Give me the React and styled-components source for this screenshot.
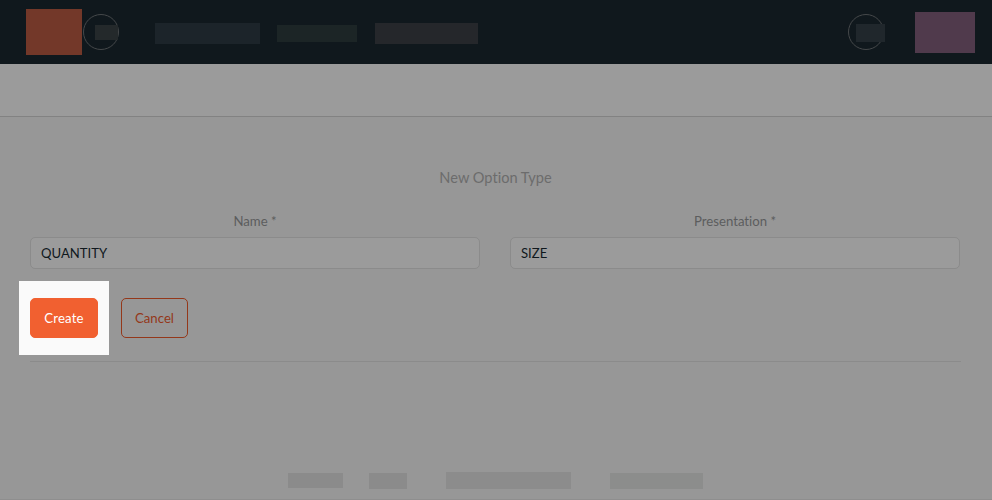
import React from "react";
import styled, { createGlobalStyle } from "styled-components";

const GlobalStyle = createGlobalStyle`
  *, *::before, *::after { box-sizing: border-box; }
  body {
    margin: 0;
    background: #979797;
    font-family: Lato, sans-serif;
    font-size: 13px;
    font-variant-ligatures: none;
  }
`;

const Page = styled.div`
  display: flex;
  flex-direction: column;
  height: 500px;
  overflow: hidden;
  background: #979797;
`;

const TopBar = styled.header`
  display: flex;
  align-items: flex-start;
  flex: 0 0 64px;
  padding: 0 17px 0 26px;
  background: #10181d;
`;

const Block = styled.div`
  flex: none;
  width: ${(p) => p.$w}px;
  height: ${(p) => p.$h}px;
  margin-top: ${(p) => p.$top}px;
  margin-left: ${(p) => p.$gap || 0}px;
  background: ${(p) => p.$tone};
`;

const Ring = styled.div`
  position: relative;
  flex: none;
  width: 36px;
  height: 36px;
  margin: 14px 0 0 1px;
  border: 1px solid #45484a;
  border-radius: 50%;
`;

const RingMask = styled.div`
  position: absolute;
  top: ${(p) => p.$y}px;
  left: ${(p) => p.$x}px;
  width: ${(p) => p.$w}px;
  height: ${(p) => p.$h}px;
  background: ${(p) => p.$tone};
`;

const Account = styled.div`
  display: flex;
  align-items: flex-start;
  margin-left: auto;
`;

const SubBar = styled.div`
  flex: 0 0 53px;
  background: #9b9b9b;
  border-bottom: 1px solid #828282;
`;

const Form = styled.main`
  display: flex;
  flex-direction: column;
  flex: 0 0 245px;
  margin: 0 31px 0 30px;
  border-bottom: 1px solid #8b8b8b;
`;

const Title = styled.h1`
  margin: 50px 0 0;
  font-size: 14.6px;
  font-weight: 400;
  line-height: 22px;
  text-align: center;
  color: #6c6c6c;
`;

const Fields = styled.div`
  display: grid;
  grid-template-columns: 450px 450px;
  column-gap: 30px;
  margin-top: 22px;
`;

const Field = styled.label`
  display: flex;
  flex-direction: column;
  line-height: 20px;
  text-align: center;
  color: #5c5d5e;
  font-size: 13.2px;
`;

const Input = styled.input`
  width: 100%;
  height: 32px;
  margin-top: 6px;
  padding: 0 10px;
  border: 1px solid #8b8b8b;
  border-radius: 5px;
  outline: none;
  background: #9b9b9b;
  color: #10181d;
  font: 13.1px Lato, sans-serif;
`;

const Actions = styled.div`
  display: flex;
  align-items: center;
  height: 74px;
  margin: 12px 0 0 -11px;
`;

const Spotlight = styled.div`
  display: flex;
  align-items: center;
  justify-content: center;
  width: 90px;
  height: 74px;
  background: #fafafa;
`;

const Button = styled.button`
  width: ${(p) => p.$w}px;
  height: 40px;
  padding: 0;
  border: 1px solid ${(p) => (p.$primary ? "#f16030" : "#94381a")};
  border-radius: 5px;
  background: ${(p) => (p.$primary ? "#f16030" : "transparent")};
  color: ${(p) => (p.$primary ? "#fff" : "#94381a")};
  font: 13.2px Lato, sans-serif;
  letter-spacing: ${(p) => (p.$primary ? "0.15px" : "0")};
`;

const CancelSlot = styled.div`
  margin-left: 12px;
`;

const Footer = styled.footer`
  display: flex;
  align-items: flex-start;
  flex: 1;
  padding: 110px 0 0 288px;
  border-bottom: 1px solid #8e8e8e;
`;

export default function App() {
  return (
    <Page>
      <GlobalStyle />
      <TopBar>
        <Block $w={56} $h={46} $top={9} $tone="#733829" />
        <Ring>
          <RingMask $x={11} $y={10} $w={23} $h={15} $tone="#24292b" />
        </Ring>
        <Block $w={105} $h={21} $top={23} $gap={36} $tone="#1c242a" />
        <Block $w={80} $h={17} $top={25} $gap={17} $tone="#1c2526" />
        <Block $w={103} $h={21} $top={23} $gap={18} $tone="#25272b" />
        <Account>
          <Ring>
            <RingMask $x={7} $y={9} $w={29} $h={18} $tone="#20272c" />
          </Ring>
          <Block $w={60} $h={41} $top={12} $gap={31} $tone="#503a4c" />
        </Account>
      </TopBar>
      <SubBar />
      <Form>
        <Title>New Option Type</Title>
        <Fields>
          <Field>
            Name *
            <Input defaultValue="QUANTITY" />
          </Field>
          <Field>
            Presentation *
            <Input defaultValue="SIZE" />
          </Field>
        </Fields>
        <Actions>
          <Spotlight>
            <Button $primary $w={68}>Create</Button>
          </Spotlight>
          <CancelSlot>
            <Button $w={67}>Cancel</Button>
          </CancelSlot>
        </Actions>
      </Form>
      <Footer>
        <Block $w={55} $h={15} $top={1} $tone="#8b8b8b" />
        <Block $w={38} $h={16} $top={1} $gap={26} $tone="#8b8b8b" />
        <Block $w={125} $h={17} $top={0} $gap={39} $tone="#8c8c8c" />
        <Block $w={93} $h={16} $top={1} $gap={39} $tone="#8c8d8c" />
      </Footer>
    </Page>
  );
}
